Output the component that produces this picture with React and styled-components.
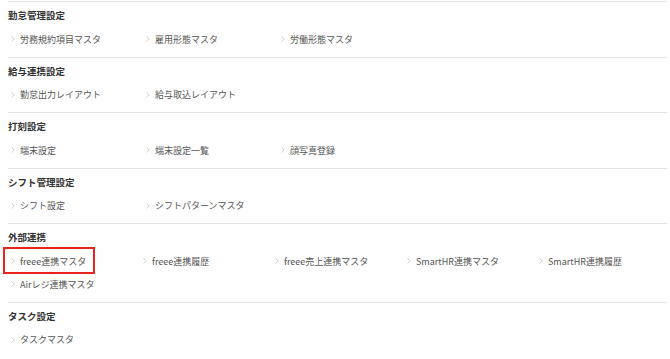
import React from "react";
import styled, { createGlobalStyle } from "styled-components";

const GlobalStyle = createGlobalStyle`
  body {
    margin: 0;
    background: #fff;
    font-family: "Noto Sans CJK JP", "Noto Sans", sans-serif;
    color: #333;
  }
`;

const Page = styled.div`
  width: 659px;
  padding: 1px 0 0 8px;
`;

const Section = styled.section`
  border-top: 1px solid #e6e6e6;
  padding: 6px 0 9.5px;
`;

const Title = styled.h2`
  margin: 0 0 9px;
  height: 14px;
  line-height: 14px;
  font-size: 9.5px;
  font-weight: 700;
  color: #333;
`;

const Items = styled.div`
  display: grid;
  grid-template-columns: repeat(5, ${({ $col }) => $col}px);
  row-gap: 7px;
`;

const Item = styled.a`
  position: relative;
  display: flex;
  align-items: center;
  gap: 5px;
  height: 16px;
  padding-left: 3px;
  font-size: 9px;
  color: #555;
  text-decoration: none;
  white-space: nowrap;
`;

const Chevron = styled.svg`
  flex: none;
  width: 4px;
  height: 6px;
`;

const Highlight = styled.span`
  position: absolute;
  left: -5px;
  top: -6px;
  width: 88px;
  height: 23px;
  border: 2px solid #e8231b;
  pointer-events: none;
`;

const sections = [
  { title: "勤怠管理設定", col: 135, items: ["労務規約項目マスタ", "雇用形態マスタ", "労働形態マスタ"] },
  { title: "給与連携設定", col: 135, items: ["勤怠出力レイアウト", "給与取込レイアウト"] },
  { title: "打刻設定", col: 135, items: ["端末設定", "端末設定一覧", "顔写真登録"] },
  { title: "シフト管理設定", col: 135, items: ["シフト設定", "シフトパターンマスタ"] },
  {
    title: "外部連携",
    col: 132,
    highlight: "freee連携マスタ",
    items: [
      "freee連携マスタ",
      "freee連携履歴",
      "freee売上連携マスタ",
      "SmartHR連携マスタ",
      "SmartHR連携履歴",
      "Airレジ連携マスタ",
    ],
  },
  { title: "タスク設定", col: 135, items: ["タスクマスタ"] },
];

export default function App() {
  return (
    <>
      <GlobalStyle />
      <Page>
        {sections.map((section) => (
          <Section key={section.title}>
            <Title>{section.title}</Title>
            <Items $col={section.col}>
              {section.items.map((label) => (
                <Item key={label} href="#">
                  <Chevron viewBox="0 0 4 6">
                    <path d="M0.5 0.5 L3.2 3 L0.5 5.5" fill="none" stroke="#c4c4c4" strokeWidth="0.8" />
                  </Chevron>
                  {label}
                  {section.highlight === label && <Highlight />}
                </Item>
              ))}
            </Items>
          </Section>
        ))}
      </Page>
    </>
  );
}
